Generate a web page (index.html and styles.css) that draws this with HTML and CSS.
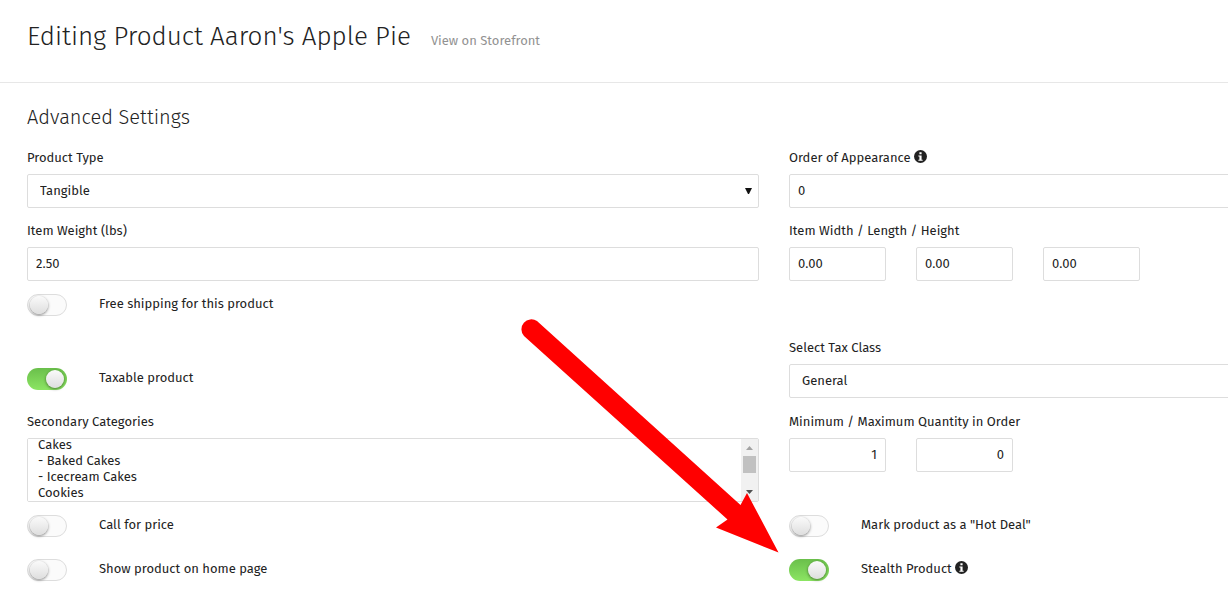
FILE: index.html
```html
<!DOCTYPE html>
<html lang="en">
<head>
  <meta charset="utf-8">
  <title>Editing Product Aaron's Apple Pie</title>
  <link rel="stylesheet" href="styles.css">
</head>
<body>
  <div class="page">
    <header class="page-header">
      <h1>Editing Product Aaron's Apple Pie</h1>
      <a href="#storefront">View on Storefront</a>
    </header>

    <form class="settings">
      <h2>Advanced Settings</h2>

      <div class="form-grid">
        <div class="field">
          <label for="productType">Product Type</label>
          <select id="productType" class="control">
            <option>Tangible</option>
          </select>
        </div>
        <div class="field">
          <label for="sortOrder">Order of Appearance
            <svg class="info" viewBox="0 0 12 12" aria-hidden="true"><circle cx="6" cy="6" r="6"/><path d="M5 2h2v2H5zM4 5h3v4h1v1H4V9h1V6H4z"/></svg>
          </label>
          <input type="text" id="sortOrder" class="control" value="0">
        </div>

        <div class="field">
          <label for="weight">Item Weight (lbs)</label>
          <input type="text" id="weight" class="control" value="2.50">
        </div>
        <div class="field">
          <label for="itemWidth">Item Width / Length / Height</label>
          <div class="small-inputs">
            <input type="text" id="itemWidth" class="control" value="0.00">
            <input type="text" class="control" aria-label="Length" value="0.00">
            <input type="text" class="control" aria-label="Height" value="0.00">
          </div>
        </div>

        <div class="switch-row full">
          <input type="checkbox" id="freeShipping" class="switch">
          <label for="freeShipping">Free shipping for this product</label>
        </div>

        <div class="switch-row beside-field">
          <input type="checkbox" id="taxable" class="switch" checked>
          <label for="taxable">Taxable product</label>
        </div>
        <div class="field">
          <label for="taxClass">Select Tax Class</label>
          <select id="taxClass" class="control">
            <option>General</option>
          </select>
        </div>

        <div class="field">
          <label for="categories">Secondary Categories</label>
          <div class="list-box">
            <select id="categories" class="control list" size="4" multiple>
              <option>Cakes</option>
              <option>- Baked Cakes</option>
              <option>- Icecream Cakes</option>
              <option>Cookies</option>
              <option>Pies</option>
              <option>Breads</option>
              <option>Pastries</option>
            </select>
            <svg class="scrollbar" viewBox="0 0 17 62" aria-hidden="true">
              <path class="track" d="M0 0h17v62H0z"/>
              <path class="up" d="M5 11h7L8.500 7z"/>
              <path class="thumb" d="M2 17h13v17H2z"/>
              <path class="down" d="M5 51h7L8.500 55z"/>
            </svg>
          </div>
        </div>
        <div class="field">
          <label for="minQty">Minimum / Maximum Quantity in Order</label>
          <div class="small-inputs">
            <input type="text" id="minQty" class="control number" value="1">
            <input type="text" class="control number" aria-label="Maximum quantity" value="0">
          </div>
        </div>

        <div class="switch-row">
          <input type="checkbox" id="callForPrice" class="switch">
          <label for="callForPrice">Call for price</label>
        </div>
        <div class="switch-row">
          <input type="checkbox" id="hotDeal" class="switch">
          <label for="hotDeal">Mark product as a "Hot Deal"</label>
        </div>

        <div class="switch-row">
          <input type="checkbox" id="showHome" class="switch">
          <label for="showHome">Show product on home page</label>
        </div>
        <div class="switch-row">
          <input type="checkbox" id="stealth" class="switch" checked>
          <label for="stealth">Stealth Product
            <svg class="info" viewBox="0 0 12 12" aria-hidden="true"><circle cx="6" cy="6" r="6"/><path d="M5 2h2v2H5zM4 5h3v4h1v1H4V9h1V6H4z"/></svg>
          </label>
        </div>
      </div>
    </form>

    <!-- pointer to the stealth switch -->
    <svg class="pointer" viewBox="0 0 258 234" aria-hidden="true">
      <path d="M16 2L219.500 186 226 174 257.500 233.500 195 208.500 206.500 200.500 3 17A10 10 0 0 1 16 2z"/>
    </svg>
  </div>
  <script>
    document.getElementById('categories').scrollTop = 2;
  </script>
</body>
</html>
```
FILE: styles.css
```css
body {
  margin: 0;
  background: #fff;
  color: #222;
  font-family: "Fira Sans", "Noto Sans", sans-serif;
  font-size: 13px;
  line-height: 20px;
}

.page {
  position: relative;
  min-height: 100vh;
  overflow: hidden;
}

.page-header {
  display: flex;
  align-items: baseline;
  gap: 20px;
  padding: 19px 27px 27px;
  border-bottom: 1px solid #e7e7e7;
}

.page-header a {
  color: #929292;
  text-decoration: none;
}

h1,
h2 {
  margin: 0;
  font-weight: 300;
}

h1 {
  font-size: 26px;
  line-height: 36px;
}

h2 {
  margin-bottom: 17px;
  font-size: 20px;
  line-height: 28px;
}

.settings {
  padding: 20px 0 10px 27px;
}

/* second column runs past the window edge */
.form-grid {
  display: grid;
  grid-template-columns: 60.95% 60.95%;
  gap: 13px 30px;
}

.full {
  grid-column: 1 / -1;
}

.field label {
  display: block;
  height: 20px;
  margin-bottom: 6px;
}

.control {
  display: block;
  width: 100%;
  height: 34px;
  padding: 0 8px 2px;
  border: 1px solid #ddd;
  border-radius: 2px;
  box-sizing: border-box;
  background: #fff;
  color: #222;
  font: inherit;
}

select.control {
  padding: 0 12px;
  appearance: none;
  background: #fff url("data:image/svg+xml,%3Csvg xmlns='http://www.w3.org/2000/svg' width='7' height='6'%3E%3Cpath d='M0 0h7L4 6H3z' fill='%23111'/%3E%3C/svg%3E") no-repeat right 6px center;
}

.list-box {
  position: relative;
}

select.list {
  height: 64px;
  padding: 0;
  background: #fff;
  overflow-y: scroll;
  scrollbar-width: none;
}

.list option {
  height: 16px;
  min-height: 0;
  padding: 0 10px;
  box-sizing: border-box;
}

.scrollbar {
  position: absolute;
  top: 1px;
  right: 1px;
  width: 17px;
  height: 62px;
  pointer-events: none;
}

.track {
  fill: #f1f1f1;
}

.thumb {
  fill: #c1c1c1;
}

.up {
  fill: #a3a3a3;
}

.down {
  fill: #505050;
}

.small-inputs {
  display: grid;
  grid-template-columns: repeat(6, 1fr);
  gap: 30px;
}

.number {
  text-align: right;
}

.switch-row {
  display: flex;
  align-items: flex-start;
  gap: 32px;
  min-height: 31px;
}

.beside-field {
  padding-top: 30px;
}

.switch {
  display: block;
  flex: none;
  width: 40px;
  height: 22px;
  margin: 0;
  padding: 1px 2px;
  border: 1px solid #ddd;
  border-radius: 11px;
  box-sizing: border-box;
  appearance: none;
  background: #fbfbfb;
}

.switch::before {
  content: "";
  display: block;
  width: 18px;
  height: 18px;
  border-radius: 50%;
  background: linear-gradient(#fafafa, #dedede);
  box-shadow: 0 1px 3px rgba(0, 0, 0, 0.5);
}

.switch:checked {
  border-color: transparent;
  background: linear-gradient(#6abf4b, #8ce563) border-box;
}

.switch:checked::before {
  margin-left: auto;
}

.info {
  width: 13px;
  height: 13px;
  vertical-align: -1px;
  fill: #222;
}

.info path {
  fill: #fff;
}

.pointer {
  position: absolute;
  left: 521px;
  top: 319px;
  width: 258px;
  height: 234px;
  fill: #f00;
  pointer-events: none;
}
```
